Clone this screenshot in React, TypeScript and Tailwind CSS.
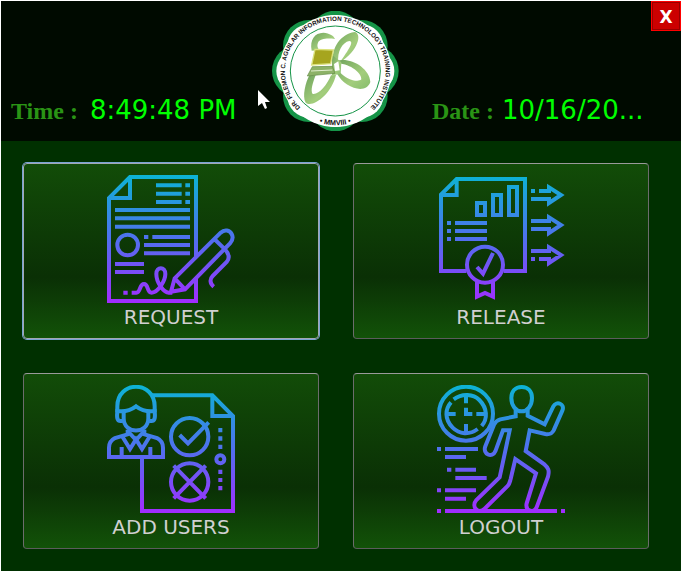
import React from "react";

const copper = "font-['DejaVu_Sans',sans-serif]";
const garamond = "font-['Liberation_Serif',serif] text-2xl leading-8 font-bold text-[#2a9415]";

function Gradient({ id }: { id: string }) {
  return (
    <defs>
      <linearGradient id={id} gradientUnits="userSpaceOnUse" x1="0" y1="30" x2="0" y2="414">
        <stop offset="0" stopColor="#0cb4d4" />
        <stop offset="0.5" stopColor="#5070ee" />
        <stop offset="1" stopColor="#a22cff" />
      </linearGradient>
    </defs>
  );
}

function Icon({ id, children }: { id: string; children: React.ReactNode }) {
  return (
    <svg viewBox="36 30 384 384" className="size-32" fill="none" stroke={`url(#${id})`} strokeWidth="12" aria-hidden="true">
      <Gradient id={id} />
      {children}
    </svg>
  );
}

function RequestIcon() {
  return (
    <Icon id="g-request">
      <path d="M303 276V36H105L42 99V408H303V338" />
      <path d="M105 36V99H42" />
      <path d="M183 61H260M271 61H285M183 86H260M271 86H285M183 111H260M271 111H285" />
      <path d="M60 135H285M60 160H285M60 185H285M147 216H160M172 216H285M147 240H285M147 265H285M60 297H147M60 321H147M85 383H98" />
      <circle cx="98" cy="240" r="31" />
      <path d="M110 383H124C138 383 132 357 147 357C162 357 154 383 170 383C190 383 211 346 211 327C211 304 184 304 184 327C184 352 205 383 222 383H232" />
      <path d="M239 340L377 203C389 192 404 196 410 207C416 218 413 226 405 235L270 373L228 380ZM239 340L270 373M358 222L390 253" />
      <path d="M390 253C403 267 405 279 395 291L353 333C344 342 344 355 356 365" />
    </Icon>
  );
}

function ReleaseIcon() {
  return (
    <Icon id="g-release">
      <path d="M124 318H48V89L95 42H300V318H236M95 42V90H48" />
      <path d="M156 114H180V150H156ZM204 90H228V150H204ZM252 66H276V150H252Z" />
      <path d="M66 174H78M90 174H186M66 198H78M90 198H186M66 222H78M90 222H186" />
      <circle cx="180" cy="299" r="54" />
      <path d="M156 306L174 326L204 264M156 350V395L180 384L204 395V350" />
      <path d="M318 78H330M342 78H372V67L408 90L372 114V102H318" />
      <path d="M318 168H372V157L408 180L372 204V192H318" />
      <path d="M318 258H372V247L408 270L372 294V282H342M330 282H318" />
    </Icon>
  );
}

function UsersIcon() {
  return (
    <Icon id="g-users">
      <path d="M172 61H352L414 123V408H141V246M352 61V123H414" />
      <path d="M67 112V94C67 16 179 16 179 94V112" />
      <path d="M86 136C62 145 66 122 67 108C90 112 108 105 123 94C138 105 156 112 179 108C180 122 184 145 160 136" />
      <path d="M86 108V130C86 179 160 179 160 130V108" />
      <path d="M98 164V178L60 189C46 196 42 206 42 218V246H204V218C204 206 200 196 186 189L148 178V164M80 216V246M166 216V246" />
      <path d="M81 183L105 222L123 193L141 222L165 183M98 168L123 195L148 168" />
      <circle cx="284" cy="185" r="56" />
      <path d="M254 180L279 205L341 142M236 272L332 370M332 272L236 370" />
      <circle cx="284" cy="321" r="56" />
      <path d="M376 159V172M376 184V197M376 209V222M376 284V297M376 309V321M376 333V346" />
      <circle cx="376" cy="253" r="12" />
    </Icon>
  );
}

function LogoutIcon() {
  return (
    <Icon id="g-logout">
      <circle cx="123" cy="116" r="81" />
      <path d="M86 73C112 54 145 57 163 75C188 100 188 132 170 153M158 162C132 181 103 178 83 158C58 133 60 102 78 82" />
      <path d="M123 61V85M123 147V173M67 117H92M154 117H179M123 98V117H142" />
      <path d="M290 36C310 36 321 50 321 69C321 91 308 109 290 109C272 109 259 91 259 69C259 50 270 36 290 36Z" />
      <path d="M272 104V124L226 133C216 136 211 140 207 149L181 214C172 237 202 251 211 229L234 166H254L224 307L154 375C137 395 160 419 179 401L248 333C254 326 254 322 257 312L271 252L333 295L305 385C299 410 330 416 336 394L369 305C374 285 370 279 357 267L302 228L314 166L361 177C374 179 380 177 386 166L412 107C421 87 394 76 385 94L359 148L308 122V104" />
      <path d="M36 222H48M60 222H159M60 246H123M66 284H79M91 284H153M91 309H185M36 346H48M60 346H153M60 371H123M36 408H48M60 408H396M408 408H420" />
    </Icon>
  );
}

const lobes = [
  [112, 0], [79, 75], [0, 103], [-79, 75],
  [-112, 0], [-79, -75], [0, -103], [79, -75],
];

function Seal() {
  return (
    <svg viewBox="30 33 384 360" className="h-[120px] w-32" role="img" aria-label="Institute seal">
      <defs>
        <path id="seal-top" d="M125 331A151 151 0 1 1 315 331" />
        <path id="seal-bottom" d="M110 333A163 163 0 0 0 330 333" />
        <linearGradient id="leaf" x1="0" y1="0" x2="1" y2="1">
          <stop offset="0" stopColor="#6fa35c" />
          <stop offset="0.6" stopColor="#a3cd7c" />
          <stop offset="1" stopColor="#86bd6c" />
        </linearGradient>
      </defs>
      <g fill="#159447">
        {lobes.map(([x, y], i) => (
          <circle key={i} cx={220 + x} cy={213 + y} r="78" />
        ))}
      </g>
      <g fill="#fff">
        {lobes.map(([x, y], i) => (
          <circle key={i} cx={220 + x} cy={213 + y} r="65" />
        ))}
        <circle cx="220" cy="213" r="168" />
      </g>
      <circle cx="220" cy="213" r="135" fill="#fff" stroke="#159447" strokeWidth="3" />
      <g fill="url(#leaf)">
        <path d="M149 152C143 118 158 99 184 98C203 100 216 107 219 117C198 114 173 115 168 128C164 138 168 144 172 151Z" />
        <path d="M213 190C207 140 238 103 277 96C301 99 291 151 232 189C261 148 277 124 262 123C241 127 225 155 229 188Z" />
        <path d="M226 182C269 172 323 206 325 246C312 286 246 263 224 219L235 218C250 235 287 250 298 238C299 219 267 193 228 190Z" />
        <path d="M142 226C131 247 120 289 131 308C151 325 208 284 222 225L207 226C195 255 171 285 152 282C145 272 152 249 161 226Z" />
        <path d="M210 165L238 187L236 222L210 226Z" />
      </g>
      <path d="M216 192L229 184L233 211L219 213Z" fill="#fff" />
      <path d="M159 148L214 150L206 191L149 195Z" fill="#a6a51e" stroke="#dbe27e" strokeWidth="4" />
      <path d="M151 200L211 199L219 220L136 228Z" fill="#8db267" stroke="#608b43" strokeWidth="2" />
      <path d="M147 213L211 210" stroke="#e3efd0" strokeWidth="3" />
      <g className="font-['Liberation_Sans',sans-serif] font-bold" fill="#111">
        <text textAnchor="middle" className="text-[19px]">
          <textPath href="#seal-top" startOffset="50%">DR. FILEMON C. AGUILAR INFORMATION TECHNOLOGY TRAINING INSTITUTE</textPath>
        </text>
        <text textAnchor="middle" className="text-[22px]">
          <textPath href="#seal-bottom" startOffset="50%">• MMVIII •</textPath>
        </text>
      </g>
    </svg>
  );
}

const tiles = [
  { label: "REQUEST", icon: <RequestIcon />, focused: true },
  { label: "RELEASE", icon: <ReleaseIcon />, focused: false },
  { label: "ADD USERS", icon: <UsersIcon />, focused: false },
  { label: "LOGOUT", icon: <LogoutIcon />, focused: false },
];

export default function App() {
  return (
    <div className="border border-white bg-[#003000]">
      <header className="relative grid grid-cols-[271fr_128fr_281fr] items-end bg-[#000a00] py-2.5">
        <div className="flex items-baseline gap-3 pb-1 pl-2.5 whitespace-nowrap">
          <span className={garamond}>Time :</span>
          <time className={`${copper} text-[26px] leading-8 text-[#00ff00]`}>8:49:48 PM</time>
        </div>
        <Seal />
        <div className="flex items-baseline gap-2 pb-1 pl-8 whitespace-nowrap">
          <span className={garamond}>Date :</span>
          <time className={`${copper} text-[26px] leading-8 text-[#00ff00]`}>10/16/20...</time>
        </div>
        <button
          aria-label="Close"
          className="absolute top-0 right-0 flex size-[30px] items-center justify-center border border-[#ff0000] bg-[#cc0000] pt-1 font-['DejaVu_Sans',sans-serif] text-[17px] font-bold text-white inset-ring inset-ring-[#990000]"
        >
          X
        </button>
        <svg className="absolute top-[89px] left-[257px] h-5 w-3" viewBox="0 0 12 20" aria-hidden="true">
          <path d="M0 0V16L4 13L7 19L9 18L7 12H12Z" fill="#fff" />
        </svg>
      </header>
      <main className="grid grid-cols-2 gap-[34px] pt-[22px] pr-8 pb-[22px] pl-[22px]">
        {tiles.map((tile) => (
          <button
            key={tile.label}
            className={`flex h-44 flex-col items-center rounded border bg-linear-to-b from-[#124c08] via-[#0a3005] via-65% to-[#125208] pt-[11px] ${
              tile.focused
                ? "border-[#a3a8b4] ring ring-[#78a4d4]"
                : "border-[#6c6c6c] border-t-[#9a9a9a] border-b-[#5c5c5c]"
            }`}
          >
            {tile.icon}
            <span className={`${copper} text-xl leading-7 text-[#d0d0d0]`}>{tile.label}</span>
          </button>
        ))}
      </main>
    </div>
  );
}
